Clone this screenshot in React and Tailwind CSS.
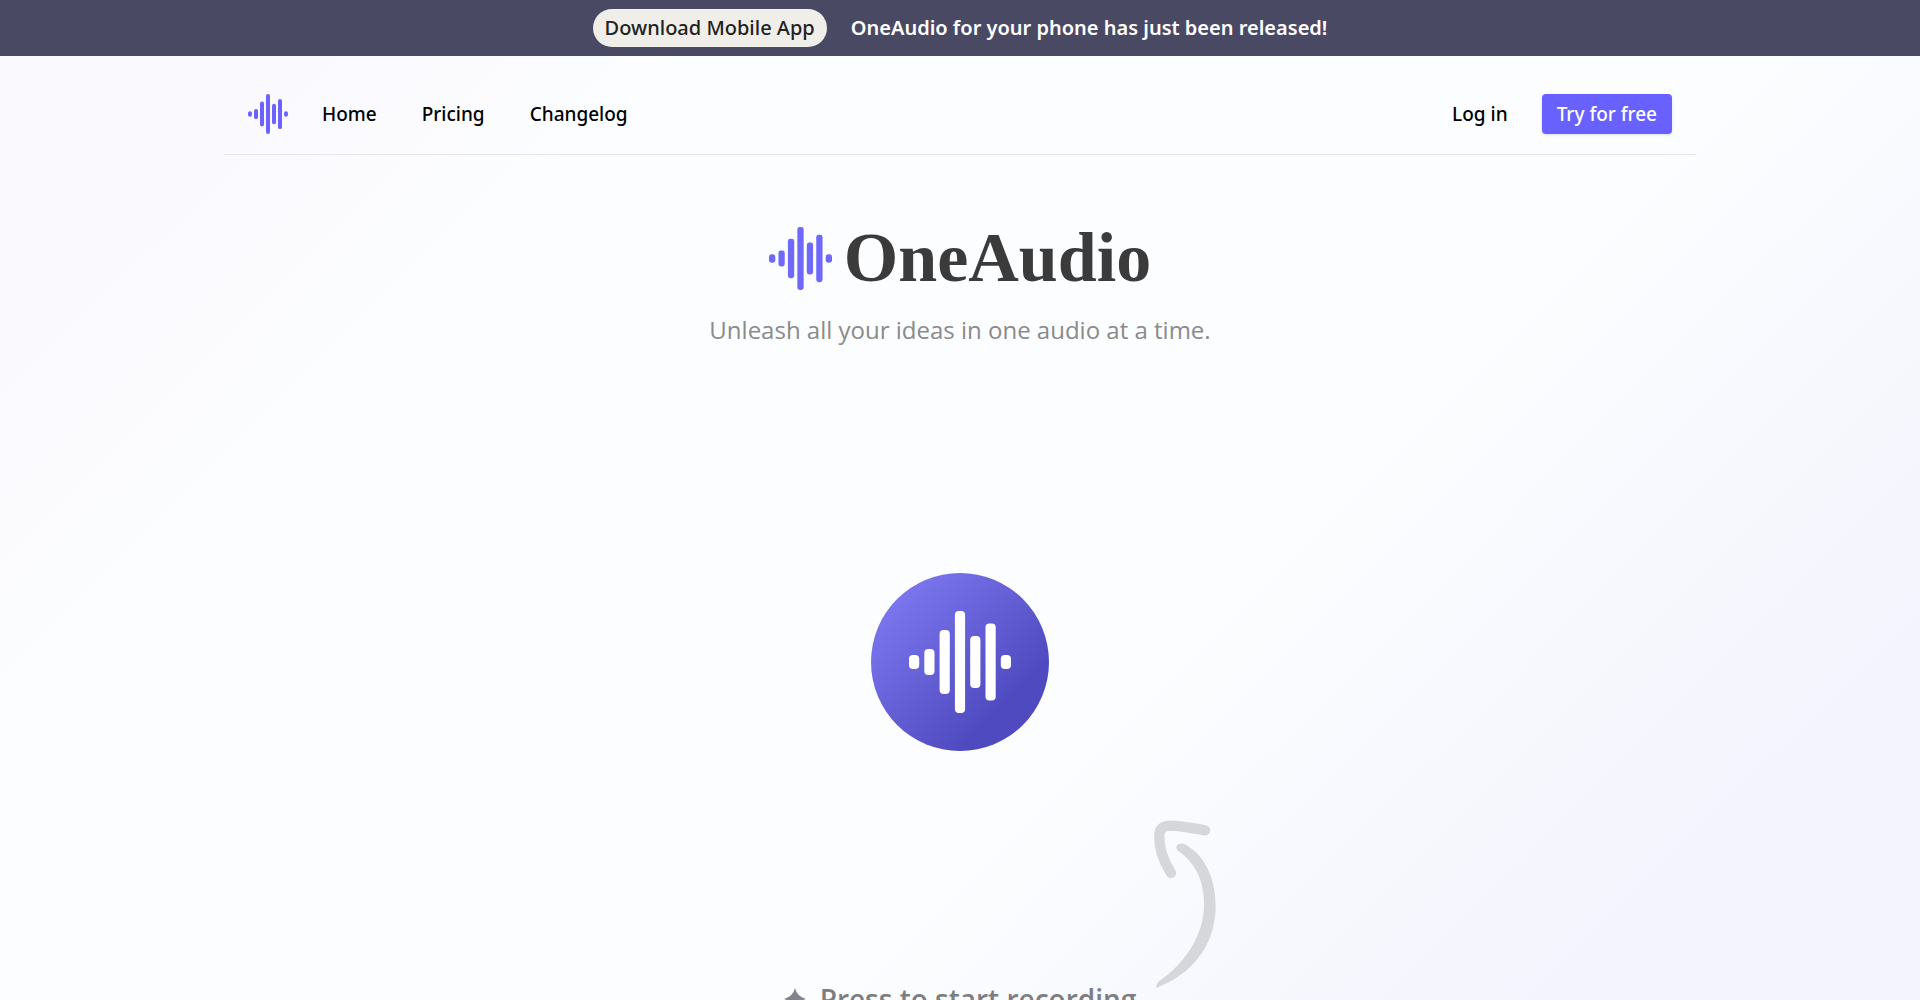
import React from 'react';

const bars = [
    { x: 0, y: 44, h: 14 },
    { x: 15.3, y: 38, h: 26 },
    { x: 30.6, y: 19, h: 64 },
    { x: 45.9, y: 0, h: 102 },
    { x: 61.2, y: 25, h: 52 },
    { x: 76.5, y: 12.5, h: 77 },
    { x: 91.8, y: 44, h: 14 },
];

const WaveIcon = ({ className, radius = 4 }) => (
    <svg className={className} viewBox="0 0 102 102" fill="currentColor" aria-hidden="true">
        {bars.map((bar) => (
            <rect key={bar.x} x={bar.x} y={bar.y} width="10.2" height={bar.h} rx={radius} />
        ))}
    </svg>
);

const CurvedArrow = () => (
    <svg className="h-[170px] w-16" viewBox="100 54 192 508" fill="none" aria-hidden="true">
        <path d="M154 215C132 180 117 140 119 100C120 80 134 73 156 73C190 74 225 82 256 87" stroke="#d6d7db" strokeWidth="31" strokeLinecap="round" strokeLinejoin="round" />
        <path d="M193 127C256 160 289 232 288 318C286 430 220 518 112 559C107 559 109 550 116 541C200 485 250 400 253 318C255 245 232 190 177 150C163 138 171 123 193 127Z" fill="#d6d7db" />
    </svg>
);

const App = () => {
    return (
        <div className="h-screen overflow-hidden bg-[#fcfdff] bg-[linear-gradient(135deg,#faf9fe_0%,#faf9fe_10%,#fcfdff_25%,#fcfdff_62%,#f3f4fd_88%)] font-['Noto_Sans','Segoe_UI',sans-serif]">
            {/* Announcement */}
            <div className="flex h-14 items-center justify-center gap-6 bg-[#4a4963] text-[20px] leading-7">
                <button className="h-[38px] rounded-full bg-[#efeee9] px-3 font-medium text-[#222222]">Download Mobile App</button>
                <p className="font-semibold text-white">OneAudio for your phone has just been released!</p>
            </div>

            {/* Navbar */}
            <header className="mx-auto flex h-[99px] max-w-[1472px] items-center justify-between border-b border-[#e8e8ec] px-6 pt-[18px] text-[19px] leading-7 font-medium text-black">
                <nav className="flex items-center gap-[45px]">
                    <a href="#home" className="flex items-center gap-[34px]">
                        <WaveIcon className="h-10 w-10 text-[#6c63ff]" radius={5} />
                        <span>Home</span>
                    </a>
                    <a href="#pricing">Pricing</a>
                    <a href="#changelog">Changelog</a>
                </nav>
                <div className="flex items-center gap-[34px]">
                    <a href="#login">Log in</a>
                    <button className="h-10 rounded bg-[#6861ff] px-[15px] text-white shadow-sm">Try for free</button>
                </div>
            </header>

            {/* Hero */}
            <main className="flex flex-col items-center font-['Open_Sans','Segoe_UI',sans-serif]">
                <div className="mt-[63px] flex items-center gap-3">
                    <WaveIcon className="size-[63px] text-[#6f68fb]" />
                    <h1 className="font-['Liberation_Serif',serif] text-[70px] leading-20 font-bold text-[#3b3b3b]">OneAudio</h1>
                </div>
                <p className="mt-3 text-[24px] leading-10 text-[#8a8a8a]">Unleash all your ideas in one audio at a time.</p>

                <button aria-label="Start recording" className="mt-[223px] flex size-[178px] items-center justify-center rounded-full bg-[linear-gradient(135deg,#7f7af2_8%,#4f4abf_75%)] text-white">
                    <WaveIcon className="size-[102px]" />
                </button>

                <div className="mt-[68px] ml-[450px]">
                    <CurvedArrow />
                </div>
                <div className="-mt-2.5 flex items-center gap-3.5 text-[#7d7e81]">
                    <svg className="size-[22px]" viewBox="0 0 24 24" fill="#82838c" aria-hidden="true">
                        <path d="M12 0Q14 9 24 12Q14 15 12 24Q10 15 0 12Q10 9 12 0Z" />
                    </svg>
                    <h2 className="text-[28px] leading-10 font-semibold">Press to start recording</h2>
                </div>
            </main>
        </div>
    );
};

export default App;
